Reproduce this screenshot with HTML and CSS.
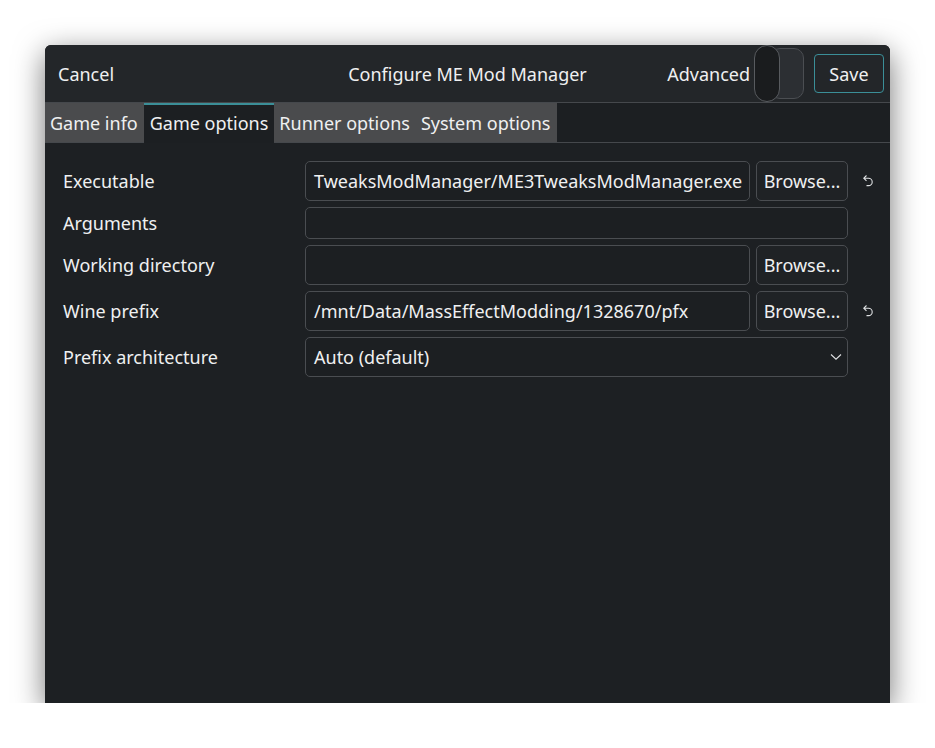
FILE: index.html
```html
<!DOCTYPE html>
<html>
<head>
<meta charset="utf-8">
<link rel="stylesheet" href="styles.css">
</head>
<body>
<div class="window">
  <header class="header">
    <div class="header-left"><span class="cancel">Cancel</span></div>
    <div class="title">Configure ME Mod Manager</div>
    <div class="header-right">
      <span class="adv">Advanced</span>
      <span class="switch"><span class="track"></span><span class="knob"></span></span>
      <span class="save">Save</span>
    </div>
  </header>
  <nav class="tabs">
    <span class="tab">Game info</span>
    <span class="tab active">Game options</span>
    <span class="tab">Runner options</span>
    <span class="tab">System options</span>
    <span class="tab-fill"></span>
  </nav>
  <main class="form">
    <div class="label">Executable</div>
    <div class="field">
      <div class="entry">TweaksModManager/ME3TweaksModManager.exe</div>
      <div class="browse">Browse...</div>
    </div>
    <div class="reset"><svg width="12" height="14" viewBox="0 0 12 14"><path d="M4.5 1.5 L1.8 4.2 L4.5 6.9 M2 4.2 H6.5 A3.7 3.7 0 0 1 6.5 11.6 H4.5" fill="none" stroke="#dfe1e3" stroke-width="1.1"/></svg></div>

    <div class="label">Arguments</div>
    <div class="field">
      <div class="entry short"></div>
    </div>
    <div class="reset"></div>

    <div class="label">Working directory</div>
    <div class="field">
      <div class="entry"></div>
      <div class="browse">Browse...</div>
    </div>
    <div class="reset"></div>

    <div class="label">Wine prefix</div>
    <div class="field">
      <div class="entry">/mnt/Data/MassEffectModding/1328670/pfx</div>
      <div class="browse">Browse...</div>
    </div>
    <div class="reset"><svg width="12" height="14" viewBox="0 0 12 14"><path d="M4.5 1.5 L1.8 4.2 L4.5 6.9 M2 4.2 H6.5 A3.7 3.7 0 0 1 6.5 11.6 H4.5" fill="none" stroke="#dfe1e3" stroke-width="1.1"/></svg></div>

    <div class="label">Prefix architecture</div>
    <div class="field">
      <div class="entry combo"><span>Auto (default)</span><svg width="12" height="8" viewBox="0 0 12 8"><path d="M1 1.5 L6 6.2 L11 1.5" fill="none" stroke="#dfe1e3" stroke-width="1.1"/></svg></div>
    </div>
    <div class="reset"></div>
  </main>
</div>
</body>
</html>
```

FILE: styles.css
```css
html, body {
  margin: 0;
  padding: 0;
  background: #ffffff;
}
body {
  font-family: "Noto Sans", "DejaVu Sans", sans-serif;
  font-size: 18px;
  color: #eff0f1;
  padding: 45px 0 0 45px;
}
.window {
  width: 845px;
  height: 658px;
  background: #1c1f22;
  border-radius: 6px 6px 0 0;
  box-shadow: 0 8px 30px rgba(0, 0, 0, 0.55);
  display: flex;
  flex-direction: column;
  overflow: hidden;
}
.header {
  height: 57px;
  background: #232629;
  border-bottom: 1px solid #45484c;
  display: grid;
  grid-template-columns: 1fr auto 1fr;
  align-items: center;
  flex: none;
}
.header-left {
  padding-left: 13px;
}
.title {
  text-align: center;
}
.header-right {
  display: flex;
  align-items: center;
  justify-content: flex-end;
  padding-right: 6px;
}
.adv {
  margin-right: 4px;
}
.switch {
  position: relative;
  width: 51px;
  height: 57px;
  display: block;
  margin-right: 9px;
}
.track {
  position: absolute;
  left: 16px;
  top: 3px;
  width: 34px;
  height: 51px;
  box-sizing: border-box;
  background: #2c2f33;
  border: 1px solid #4b4e52;
  border-radius: 10px;
}
.knob {
  position: absolute;
  left: 0;
  top: 0;
  width: 26px;
  height: 57px;
  box-sizing: border-box;
  background: #1a1c1e;
  border: 1px solid #585b5f;
  border-radius: 13px;
}
.save {
  width: 70px;
  height: 39px;
  box-sizing: border-box;
  border: 1px solid #3b8f98;
  border-radius: 4px;
  display: flex;
  align-items: center;
  justify-content: center;
  background: #232629;
}
.tabs {
  height: 39px;
  display: flex;
  border-bottom: 1px solid #45484c;
  background: #1c1f22;
  flex: none;
}
.tab {
  display: flex;
  align-items: center;
  padding: 0 6px 0 5px;
  background: #4a4b4d;
  color: #eff0f1;
}
.tab.active {
  background: #1c1f22;
  border-top: 2px solid #3b8f98;
  padding-bottom: 2px;
  margin-bottom: -1px;
  padding-left: 6px;
}
.tab-fill {
  flex: 1;
}
.form {
  display: grid;
  grid-template-columns: 242px 543px 42px;
  row-gap: 6px;
  padding: 18px 0 0 18px;
  align-items: center;
  background: #1d2023;
  flex: 1;
  align-content: start;
}
.label {
  color: #eff0f1;
}
.field {
  display: flex;
  gap: 6px;
}
.entry {
  flex: 1;
  height: 40px;
  box-sizing: border-box;
  border: 1px solid #4a4d51;
  border-radius: 5px;
  padding: 0 8px;
  display: flex;
  align-items: center;
  white-space: nowrap;
  overflow: hidden;
  background: #1c1f22;
}
.entry.short {
  height: 32px;
}
.entry.combo {
  justify-content: space-between;
  padding-right: 5px;
}
.browse {
  width: 92px;
  height: 40px;
  box-sizing: border-box;
  border: 1px solid #4a4d51;
  border-radius: 5px;
  display: flex;
  align-items: center;
  justify-content: center;
  background: #1f2225;
}
.reset {
  display: flex;
  align-items: center;
  justify-content: center;
  padding-right: 2px;
}
```
